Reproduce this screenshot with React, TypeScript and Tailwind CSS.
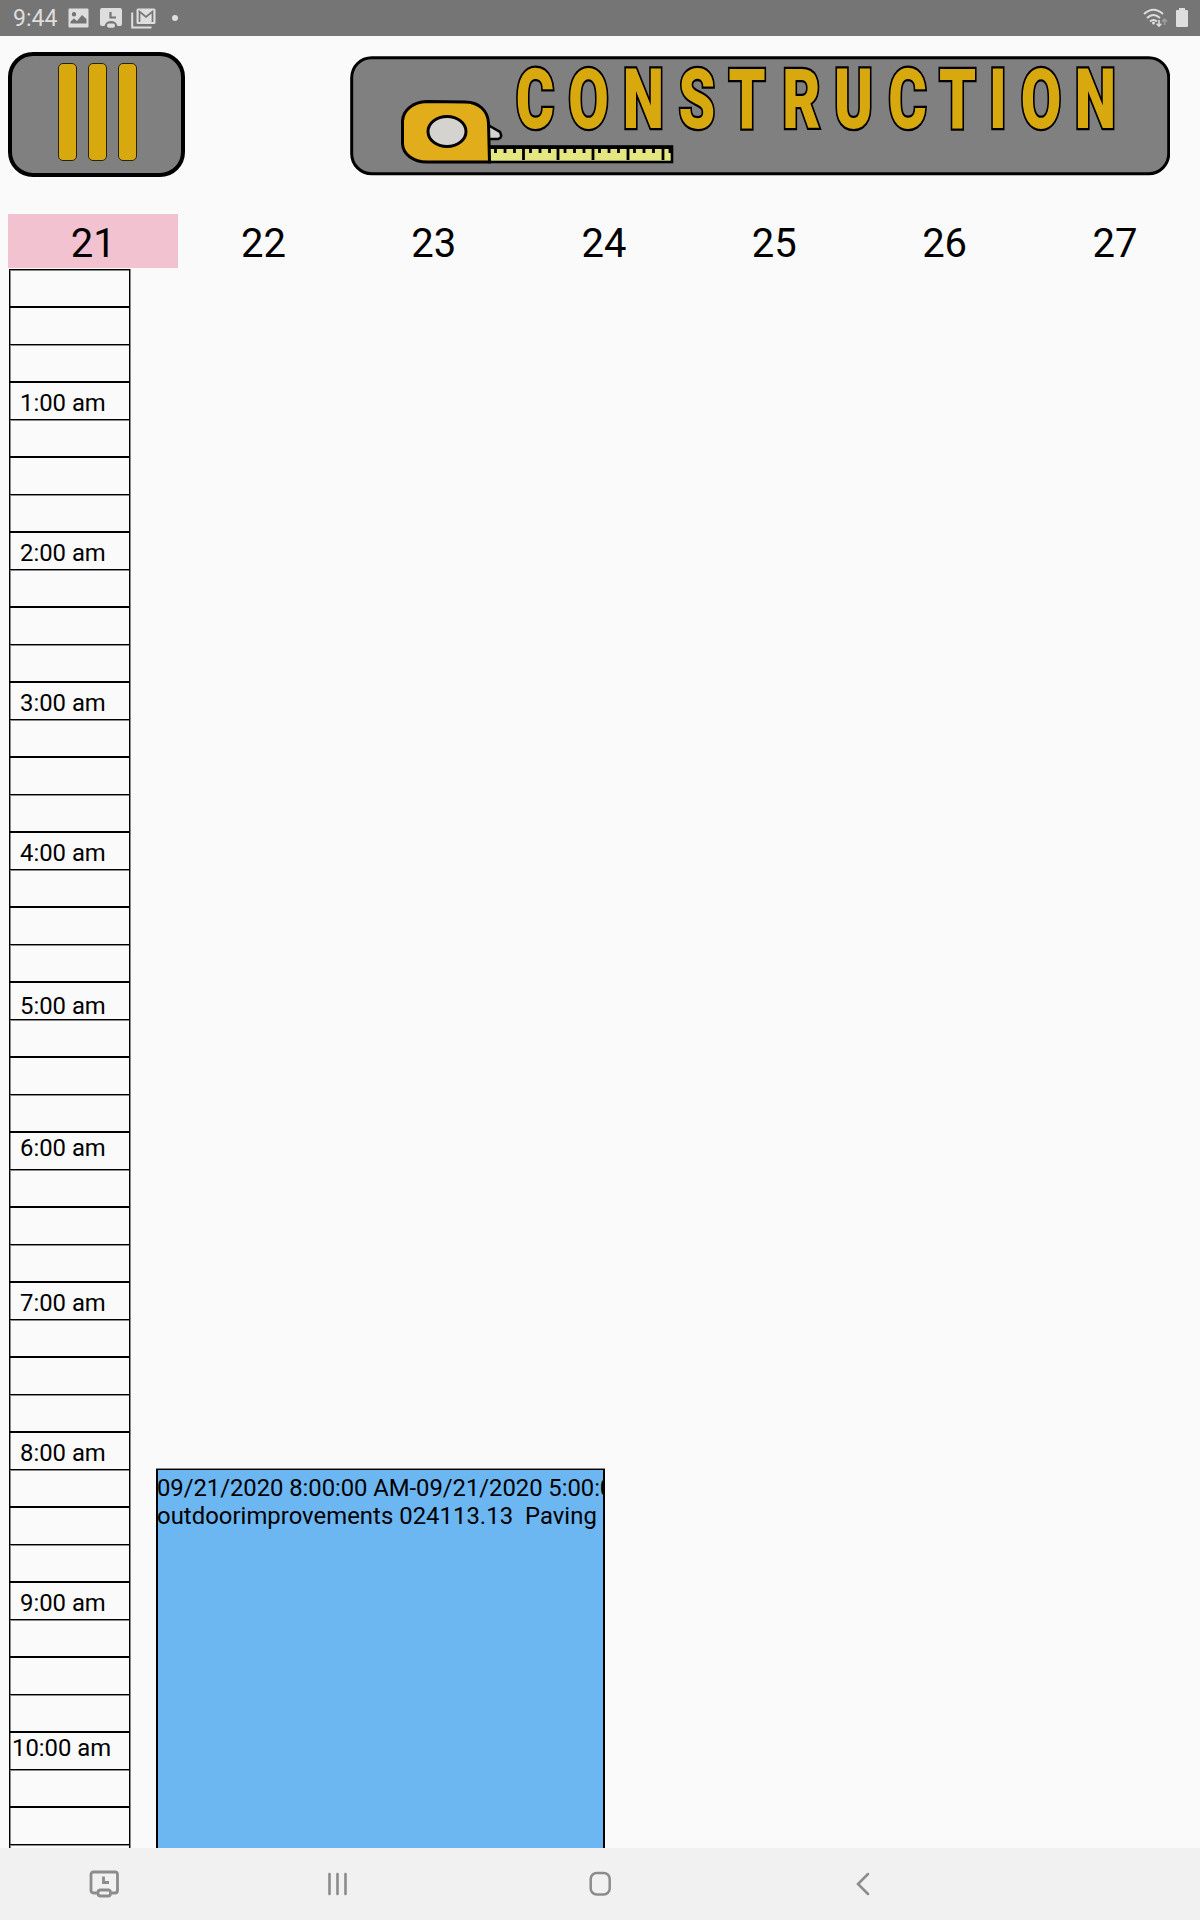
import React from "react";

const days = [21, 22, 23, 24, 25, 26, 27];

const labels: Record<number, { text: string; x: number; y: number }> = {
  3: { text: "1:00 am", x: 10, y: 6 },
  7: { text: "2:00 am", x: 10, y: 6 },
  11: { text: "3:00 am", x: 10, y: 6 },
  15: { text: "4:00 am", x: 10, y: 6 },
  19: { text: "5:00 am", x: 10, y: 9 },
  23: { text: "6:00 am", x: 10, y: 1 },
  27: { text: "7:00 am", x: 10, y: 6 },
  31: { text: "8:00 am", x: 10, y: 6 },
  35: { text: "9:00 am", x: 10, y: 6 },
  39: { text: "10:00 am", x: 2, y: 1 },
};

const letterX = "535 588.5 643.5 697 747 801.5 853.5 907.5 957.5 998 1041 1095.5"
  .split(" ")
  .map((v) => (Number(v) - 350) / 0.7)
  .join(" ");

function StatusBar() {
  return (
    <header className="flex h-9 shrink-0 items-center bg-[#757575] text-[#dedede]">
      <span className="ml-[13px] w-[45px] pt-[2px] text-[23px] leading-9">9:44</span>
      <svg className="ml-[10px]" width="21" height="20" viewBox="0 0 21 20">
        <path fillRule="evenodd" fill="currentColor" d="M1.500 .5H19.500Q20.500 .5 20.500 1.500V18.500Q20.500 19.500 19.500 19.500H1.500Q.5 19.500 .5 18.500V1.500Q.5 .5 1.500 .5ZM2.500 15.500H18.500V11L14 7L9 13L6 10.500L2.500 13.500ZM6 4A2.200 2.200 0 1 0 6 8.400A2.200 2.200 0 1 0 6 4Z" />
      </svg>
      <svg className="ml-[11px]" width="22" height="20" viewBox="0 0 22 20">
        <path fill="currentColor" d="M2 0H20Q22 0 22 2V16Q22 18 20 18H17.500Q16 13 11 13Q6 13 4.500 18H2Q0 18 0 16V2Q0 0 2 0Z" />
        <path fill="none" stroke="#757575" strokeWidth="2.200" d="M10.500 4V9.500H16" />
        <rect x="7" y="15.500" width="8" height="4.300" rx="2" fill="currentColor" />
      </svg>
      <svg className="ml-[9px]" width="25" height="21" viewBox="0 0 25 21">
        <rect x="5.500" y=".5" width="19" height="15.500" rx="1.500" fill="currentColor" />
        <path fill="none" stroke="#757575" strokeWidth="1.700" d="M8.500 14V3.500L15 9L21.500 3.500V14" />
        <path fill="none" stroke="currentColor" strokeWidth="2" d="M1.200 4.500V19.500H20.500" />
      </svg>
      <span className="ml-4 size-[6px] rounded-full bg-[#dedede]" />
      <svg className="ml-auto" width="25" height="20" viewBox="0 0 25 20">
        <g fill="none" stroke="currentColor" strokeWidth="2">
          <path d="M1 6Q10.500 -2.500 20 6" />
          <path d="M4 10Q10.500 4 17 10" />
          <path d="M7 13.500Q10.500 10.500 14 13.500" />
        </g>
        <circle cx="10.500" cy="15" r="1.500" fill="currentColor" />
        <path fill="none" stroke="currentColor" strokeWidth="1.600" d="M16 12V18M13.700 15.700L16 18L18.300 15.700" />
        <path fill="none" stroke="#9d9d9d" strokeWidth="1.800" d="M21.500 17V11.500M19 13.700L21.500 11.200L24 13.700" />
      </svg>
      <svg className="-mt-[2px] ml-2 mr-3" width="12" height="19" viewBox="0 0 12 19">
        <path fill="currentColor" d="M3 0H9V2H11Q12 2 12 3V18Q12 19 11 19H1Q0 19 0 18V3Q0 2 1 2H3Z" />
      </svg>
    </header>
  );
}

function Banner() {
  return (
    <svg className="-mt-px" width="820" height="120" viewBox="350 56 820 120">
      <rect x="351.700" y="57.700" width="817" height="116" rx="20" fill="#808080" stroke="#000" strokeWidth="3" />
      <path d="M488 125L500 132Q503 138 498 139H488Z" fill="#d5d3cf" stroke="#000" strokeWidth="2.600" />
      <rect x="489" y="146.500" width="183" height="15.500" fill="#e4e681" stroke="#000" strokeWidth="2.600" />
      <g stroke="#000" strokeWidth="2.800">
        <path d="M489 147.500H672" />
        <path d="M495.500 147V153M505 147V153M514.500 147V153M530.500 147V153M540 147V153M549.500 147V153M565 147V153M574.500 147V153M584 147V153M599.500 147V153M609 147V153M618.500 147V153M634.500 147V153M644 147V153M653.500 147V153M670 147V153" />
        <path d="M523.500 147V160M558 147V160M593 147V160M628 147V160M663 147V160" />
      </g>
      <path d="M402.500 121C403 110 413 102 427 101.500L465 102C479 102 488 111 488.500 123L489.500 162H427C413 162 403 154 402.500 144Z" fill="#e1ad1b" stroke="#000" strokeWidth="3" />
      <ellipse cx="447" cy="131.500" rx="19" ry="15" fill="#d5d3cf" stroke="#000" strokeWidth="3" />
      <text
        transform="translate(350 128) scale(.7 1)"
        x={letterX}
        textAnchor="middle"
        fontSize="84"
        fontWeight="900"
        fontFamily="Roboto"
        fill="#d8a80f"
        stroke="#000"
        strokeWidth="4.600"
        paintOrder="stroke"
      >
        CONSTRUCTION
      </text>
    </svg>
  );
}

function TimeCell({ index }: { index: number }) {
  const label = labels[index];
  return (
    <div
      className={
        "w-[121px] shrink-0 border-x border-x-black border-t-black " +
        (index % 2
          ? "h-[38px] border-t-2 shadow-[1px_0_0_#8a8a8a,inset_1px_0_0_#8a8a8a]"
          : "h-[37px] border-t shadow-[1px_0_0_#8a8a8a,inset_1px_1px_0_#8a8a8a]")
      }
    >
      {label && (
        <div className="whitespace-nowrap text-[23.850px] leading-7" style={{ paddingLeft: label.x, paddingTop: label.y }}>
          {label.text}
        </div>
      )}
    </div>
  );
}

export default function App() {
  return (
    <div className="flex h-[1920px] w-[1200px] flex-col overflow-hidden bg-[#fafafa] font-['Roboto',sans-serif] text-black">
      <StatusBar />
      <div className="flex h-[178px] shrink-0 items-start justify-between pl-2 pr-[30px] pt-4">
        <div className="flex h-[125px] w-[177px] justify-center gap-[11px] rounded-[25px] border-4 border-black bg-[#808080] pl-[2px] pt-[7px]">
          <span className="h-[98px] w-[19px] rounded-[5px] border border-[#2b2203] bg-[#d8a80f]" />
          <span className="h-[98px] w-[19px] rounded-[5px] border border-[#2b2203] bg-[#d8a80f]" />
          <span className="h-[98px] w-[19px] rounded-[5px] border border-[#2b2203] bg-[#d8a80f]" />
        </div>
        <div className="pt-[5px]">
          <Banner />
        </div>
      </div>
      <div className="flex h-[55px] shrink-0 pl-2">
        {days.map((d) => (
          <div key={d} className={"h-[54px] w-[170.300px] shrink-0 text-center text-[40px] leading-[60px] " + (d === 21 ? "bg-[#f3c2d0]" : "")}>
            {d}
          </div>
        ))}
      </div>
      <main className="flex min-h-0 flex-1 overflow-hidden pl-[9px]">
        <div className="flex w-[121px] flex-col">
          {Array.from({ length: 43 }, (_, i) => (
            <TimeCell key={i} index={i} />
          ))}
        </div>
        <div className="ml-[26px] mt-[1200px] h-[400px] w-[449px] shrink-0 overflow-hidden whitespace-pre border-x-2 border-t border-black bg-[#6cb6f1] pt-1 text-[23.850px] leading-7 shadow-[0_-1px_0_#8a8a8a]">
          <div className="-ml-px tracking-[-0.05px]">09/21/2020 8:00:00 AM-09/21/2020 5:00:00 PM</div>
          <div className="-ml-px tracking-[0.04px]">outdoorimprovements 024113.13  Paving</div>
        </div>
      </main>
      <nav className="flex h-[72px] shrink-0 items-center bg-[#f1f1f1] text-[#8c8c8c]">
        <svg className="ml-[89px]" width="31" height="28" viewBox="0 0 31 28" fill="none" stroke="currentColor" strokeWidth="2.800">
          <path d="M8 23H4.500Q2 23 2 20.500V4.500Q2 2 4.500 2H26Q28.500 2 28.500 4.500V20.500Q28.500 23 26 23H22.500" />
          <path d="M14.500 6.500V12.500H20" />
          <rect x="9" y="20" width="12.500" height="6" rx="2.500" />
        </svg>
        <svg className="ml-[205px]" width="26" height="24" viewBox="0 0 26 24" fill="none" stroke="currentColor" strokeWidth="2.600" strokeLinecap="round">
          <path d="M4.500 2V22M12.500 2V22M20.500 2V22" />
        </svg>
        <svg className="ml-[238px]" width="24" height="26" viewBox="0 0 24 26" fill="none" stroke="currentColor" strokeWidth="2.500">
          <rect x="1.700" y="2" width="19" height="21.500" rx="6" />
        </svg>
        <svg className="ml-[242px]" width="16" height="26" viewBox="0 0 16 26" fill="none" stroke="currentColor" strokeWidth="2.500" strokeLinecap="round">
          <path d="M13 3L3 13L13 23" />
        </svg>
      </nav>
    </div>
  );
}
